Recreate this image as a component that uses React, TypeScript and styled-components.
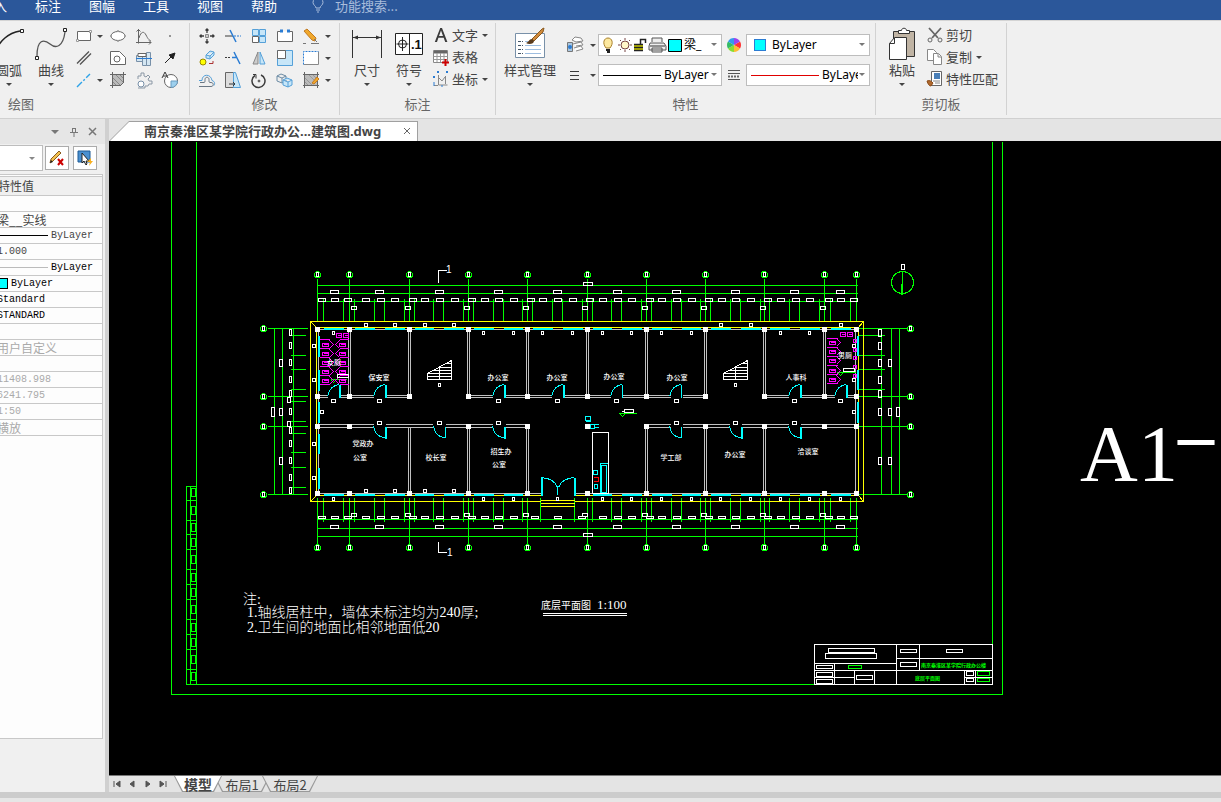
import React from "react";
import styled, { createGlobalStyle } from "styled-components";

const Global = createGlobalStyle`
  * { box-sizing: border-box; }
  body { margin: 0; background: #e6e6e6; font-family: "Noto Sans", "Noto Sans CJK SC", sans-serif; }
  button, select { font: inherit; color: inherit; }
`;

/* ---------- shell ---------- */
const Shell = styled.div`
  display: flex; flex-direction: column; min-height: 100vh; overflow: hidden;
  font-family: "Noto Sans CJK SC", sans-serif; font-size: 13px; color: #444;
`;
const MenuBar = styled.nav`
  display: flex; align-items: flex-start; height: 20px; background: #2b579a; color: #fff; overflow: hidden;
`;
const MenuItem = styled.button`
  flex: none; width: 54px; height: 12px; line-height: 12px; padding: 0; border: 0; background: none; text-align: center;
  &:first-child { margin-left: -33px; }
`;
const MenuSearch = styled.button`
  display: flex; align-items: center; gap: 11px; height: 12px; line-height: 12px; padding: 0; margin-left: 21px;
  border: 0; background: none; color: #a9bddc; white-space: nowrap;
`;
const Ribbon = styled.header`
  display: flex; background: #f0f0f0; border-top: 1px solid #d4d4d4; border-bottom: 1px solid #d0d0d0;
  padding: 2px 0 3px; overflow: hidden;
`;
const Group = styled.section<{ $w: number; $off?: number }>`
  flex: none; width: ${(p) => p.$w}px; margin-left: ${(p) => -(p.$off || 0)}px; border-right: 1px solid #d2d2d2;
`;
const GroupBody = styled.div<{ $pad: number; $end?: boolean }>`
  display: flex; height: 72px; padding-left: ${(p) => (p.$end ? 0 : p.$pad)}px; padding-right: ${(p) => (p.$end ? p.$pad : 0)}px;
  justify-content: ${(p) => (p.$end ? "flex-end" : "flex-start")};
`;
const GroupLabel = styled.div` height: 20px; line-height: 18px; text-align: center; color: #666; `;
const BigButton = styled.button<{ $w?: number }>`
  display: flex; flex-direction: column; align-items: center; flex: none; width: ${(p) => p.$w || 42}px;
  padding: 4px 0 0; border: 0; background: none; line-height: 18px; white-space: nowrap;
  svg:first-child { height: 34px; }
`;
const ArrowBox = styled.span` display: flex; align-items: center; justify-content: center; width: 10px; height: 10px; `;
const Caret = styled.i<{ $c?: string }>`
  display: block; width: 0; height: 0; border: 3px solid transparent; border-top-color: ${(p) => p.$c || "#444"}; border-bottom: 0;
`;
const IconGrid = styled.div<{ $cols: string }>`
  display: grid; grid-template-columns: ${(p) => p.$cols}; grid-auto-rows: 22px; padding-top: 2px; align-content: start;
`;
const ToolButton = styled.button`
  display: flex; align-items: center; justify-content: center; padding: 0; border: 0; background: none;
  svg { width: 18px; height: 18px; flex: none; }
`;
const List = styled.div<{ $m?: number }>` padding-top: 2px; margin-left: ${(p) => p.$m || 0}px; `;
const ListButton = styled.button`
  display: flex; align-items: center; gap: 2px; height: 22px; padding: 0 0 2px; border: 0; background: none; white-space: nowrap;
  line-height: 18px;
  svg { width: 18px; height: 18px; }
`;
const PropGrid = styled.div`
  display: grid; grid-template-columns: 26px 10px 124px 24px 124px; grid-auto-rows: 22px; row-gap: 8px;
  align-content: start; padding-top: 11px; margin-left: 2px; align-items: center; justify-items: center;
`;
const Combo = styled.label`
  position: relative; display: flex; align-items: center; width: 100%; height: 22px; background: #fff; border: 1px solid #bdbdbd;
  color: #000; padding-left: 4px; overflow: hidden;
  font: 12px/18px "Noto Sans", "Noto Sans CJK SC", sans-serif;
  & > svg { flex: none; }
`;
const ComboSelect = styled.select<{ $m?: number }>`
  appearance: none; flex: 1; min-width: 0; border: 0; background: none; padding: 0; margin: 0 11px 0 ${(p) => p.$m || 0}px;
  color: #000; outline: 0; height: 20px; text-overflow: clip;
`;
const ComboArrow = styled.span` position: absolute; right: 4px; top: 8px; `;
const Swatch = styled.span<{ $s: number; $b: string }>`
  flex: none; width: ${(p) => p.$s}px; height: ${(p) => p.$s}px; background: #0ff; border: 1px solid ${(p) => p.$b};
`;
const Rule = styled.span<{ $w: number; $c: string }>` flex: none; width: ${(p) => p.$w}px; height: 1px; background: ${(p) => p.$c}; `;

/* ---------- left panel ---------- */
const Work = styled.main` display: flex; flex: 1; min-height: 0; `;
const Panel = styled.aside`
  display: flex; flex-direction: column; flex: none; width: 120px; margin-left: -15px; background: #f0f0f0;
`;
const PanelHead = styled.div`
  display: flex; align-items: center; justify-content: flex-end; gap: 10px; height: 25px; padding-right: 8px; background: #e6e6e6;
`;
const HeadButton = styled.button` display: flex; padding: 0; border: 0; background: none; `;
const PanelTools = styled.div` display: flex; align-items: center; height: 28px; padding-bottom: 1px; `;
const PanelCombo = styled(Combo)` width: 58px; height: 26px; margin-right: 2px; & > span { top: 11px; right: 7px; } `;
const PanelButton = styled.button`
  display: flex; align-items: center; justify-content: center; width: 24px; height: 24px; margin-right: 4px; padding: 0;
  background: #fff; border: 1px solid #ababab;
`;
const PanelBody = styled.div`
  flex: 1; margin: 2px 2px 0 0; border: 1px solid #c8c8c8; border-left: 0; background: #fdfdfd; padding-top: 1px;
`;
const PropTable = styled.table`
  width: 100%; border-collapse: collapse; font: 12px/14px "Noto Sans CJK SC", sans-serif; color: #444;
  th { height: 19px; padding: 0 0 0 13px; background: #f0f0f0; text-align: left; font-weight: 400; border: 1px solid #c8c8c8; border-width: 1px 0; }
`;
const PropCell = styled.td<{ $tone: string }>`
  height: 16px; padding: 0 0 0 12px; border-bottom: 1px solid #c8c8c8; color: ${(p) => p.$tone}; white-space: nowrap;
`;
const CellLine = styled.div`
  display: flex; align-items: center; height: 15px; gap: 3px; overflow: hidden;
`;
const Mono = styled.span` font: 10px/14px "Liberation Mono", monospace; `;
const PanelFoot = styled.div` height: 53px; `;
const Splitter = styled.div` flex: none; width: 4px; background: #d0d0d0; `;

/* ---------- document area ---------- */
const Doc = styled.section` display: flex; flex-direction: column; flex: 1; min-width: 0; `;
const TabStrip = styled.div` display: flex; align-items: flex-end; height: 22px; background: #e4e4e4; `;
const FileTab = styled.div`
  position: relative; display: flex; align-items: center; justify-content: space-between; width: 309px; height: 20px; padding: 0 7px 0 35px;
  background: #a0a0a0; clip-path: polygon(0 100%, 20px 0, 100% 0, 100% 100%);
  font: bold 13px/18px "Noto Sans", "Noto Sans CJK SC", sans-serif; color: #444; white-space: nowrap;
  &::before { content: ""; position: absolute; inset: 1px 1px 0 0; background: #fff; clip-path: polygon(1px 100%, 20px 0, 100% 0, 100% 100%); }
  & > * { position: relative; }
`;
const Canvas = styled.div`
  flex: 1; min-height: 634px; background: #000; overflow: hidden;
  svg { display: block; }
`;
const LayoutStrip = styled.div`
  display: flex; height: 17px; background: #e4e4e4; border-top: 1px solid #777;
`;
const NavButtons = styled.div` display: flex; align-items: center; width: 65px; padding-right: 3px; `;
const NavButton = styled.button` display: flex; justify-content: center; width: 16px; padding: 0; border: 0; background: none; `;
const LayoutTab = styled.button<{ $on?: boolean }>`
  position: relative; width: ${(p) => (p.$on ? 48 : 56)}px; height: 16px; padding: 0; margin-right: -8px; border: 0; background: #999;
  clip-path: polygon(0 0, 8px 100%, calc(100% - 8px) 100%, 100% 0); line-height: 13px; color: #444;
  font-weight: ${(p) => (p.$on ? 700 : 400)}; font-size: ${(p) => (p.$on ? 14 : 13)}px;
  z-index: ${(p) => (p.$on ? 1 : 0)};
  &::before { content: ""; position: absolute; inset: 0 0 1px; background: ${(p) => (p.$on ? "#fff" : "#e4e4e4")};
    clip-path: polygon(1px 0, 9px 100%, calc(100% - 9px) 100%, calc(100% - 1px) 0); }
  span { position: relative; }
`;
const StatusBand = styled.div` height: 6px; background: #ccc; `;
const StatusBar = styled.footer` height: 4px; background: #e6e6e6; `;

/* ---------- icons ---------- */
const G = "#666", D = "#3b3b3b", B = "#2b7cd3", L = "#c7e6f8";
const I = ({ children }: { children: React.ReactNode }) => (
  <svg viewBox="0 0 18 18" width="18" height="18" fill="none" stroke={G} strokeWidth="1">{children}</svg>
);
const icons: Record<string, React.ReactNode> = {
  rect: <I><path d="M2.500 4.500h13v9h-13z" fill="#fff"/><path d="M14.500 3.500h2v2h-2zM1.500 12.500h2v2h-2z" fill="#fff" stroke="#999"/></I>,
  dline: <I><path d="M2 14.500 14 2.500M5 15.500 16 4.500" stroke="#555" strokeWidth="1.400"/></I>,
  axis: <I><path d="M2 16 15 3" stroke="#2ea3e8" strokeWidth="1.400" strokeDasharray="7 2 2 2"/></I>,
  ellipse: <I><ellipse cx="9" cy="9" rx="7" ry="4.500" fill="#fff"/><path d="M8.500 3.500h1v1h-1zM8.500 13.500h1v1h-1zM1.500 8.500h1v1h-1zM15.500 8.500h1v1h-1z" fill="#fff" stroke="#999"/></I>,
  plate: <I><path d="M1.500 2.500h9l6 6v7h-15z" fill="#fff"/><circle cx="8" cy="10" r="3"/></I>,
  hatch: <I><path d="M3.500 3.500h11v8l-3 3h-8z" fill="#bbb"/><path d="M4 7l7 7M4 11l3 3M7 4l7 7M11 4l3 3" stroke="#888"/><path d="M3.500 1v16M1 3.500h16M14.500 1v11M1 14.500h11"/></I>,
  curve: <I><path d="M3.500 2v14.500M1 15.500h15M1.500 4.500l2-2 2 2M14 13.500l2 2-2 2"/><path d="M4 11C6 4 9 4 11 8s3 5 5 6"/></I>,
  shaft: <I><path d="M1.500 6.500h6v6h-6zM7.500 7.500h4v9h-4zM11.500 3.500h4v13h-4z" fill="#d4e6f2" stroke="#7890a8"/><path d="M1 9.500h16" stroke={B}/><path d="M3 4.500h8v3h-8z" fill="#fff"/></I>,
  gear: <I><path d="M3 8V5h3V2h3v3l2 1 2-2 2 2-2 2 1 2h3v3h-3l-1 2h-3v2H3" stroke="#8a97a5"/><circle cx="6" cy="13" r="3" fill="#fff" stroke="#7890a8"/></I>,
  dot: <I><path d="M8 8.500h2v1H8z" fill={D} stroke="none"/></I>,
  arrow: <I><path d="M4 14 12 6" stroke="#222"/><path d="m14 4-2 6-4-4z" fill="#222" stroke="#222"/></I>,
  sec: <I><circle cx="10" cy="10" r="6.500" fill="#fff"/><path d="M10 10h6.500a6.500 6.500 0 0 1-6.500 6.500z" fill="#9dd0ee" stroke="#6a9cc0"/><path d="m1 7 3-6 3 6M2 5h4" stroke={D}/></I>,
  move: <I><path d="M9 2v4M9 12v4M2 9h4M12 9h4M7.500 3.500 9 2l1.500 1.500M7.500 14.500 9 16l1.500-1.500M3.500 7.500 2 9l1.500 1.500M14.500 7.500 16 9l-1.500 1.500" stroke={D} strokeWidth="1.300"/><path d="M7.500 7.500h3v3h-3z" fill="#ccc" stroke="#888"/></I>,
  trim: <I><path d="M1 9h8" stroke={D}/><path d="M10 9h7" stroke={B} strokeDasharray="2 1"/><path d="m6 3 6 12" stroke={B} strokeWidth="1.500"/></I>,
  array: <I><path d="M2.500 2.500h6v6h-6zM9.500 2.500h6v6h-6zM9.500 9.500h6v6h-6z" fill={L} stroke="#55a0d8"/><path d="M2.500 9.500h6v6h-6z" fill="#fff"/></I>,
  brk: <I><path d="M5 4.500H1.500v10h15v-10H13" fill="#fff"/><path d="M4 4h3M11 4h3" stroke={B} strokeWidth="3"/></I>,
  erase: <I><path d="m2 4 3-2 9 9-1 3-3-1z" fill="#f0a82c" stroke="#c27a20"/><path d="m12 12 3 3M1 16.500h3M9 16.500h8" stroke="#777"/></I>,
  copy: <I><circle cx="5" cy="13" r="3" fill="#ff0" stroke="#998800"/><path d="m8 6 4-4 4 1v3l-4 4-4-1zM8 6l4 1 4-4M12 7v3" fill={L} stroke="#55a0d8"/><path d="M11 14.500h4V12" stroke="#a33"/></I>,
  ext: <I><path d="M1 8.500h6" stroke={D} strokeDasharray="2 1"/><path d="M10 3 16 15M8 8.500h5" stroke={B} strokeWidth="1.500"/></I>,
  mirror: <I><path d="M8 3v12H3z" fill="#ccc" stroke="#888"/><path d="M10 3v12h5z" fill={L} stroke="#55a0d8"/></I>,
  scale: <I><path d="M1.500 1.500h15v15h-15z" fill={L} stroke="#55a0d8"/><path d="M1.500 1.500h8v8h-8z" fill="#fff"/></I>,
  region: <I><path d="M1.500 2.500h15v13h-15z" fill="#fff" stroke="#888"/><path d="M1.500 15.500V2.500h15" stroke="#fff"/><path d="M1.500 15.500V2.500h15" stroke={B} strokeDasharray="2 1"/></I>,
  offset: <I><path d="M1 15.500h12c3 0 3-4 0-4h-1c-1 0-1-1-1-3 0-3-4-3-4 0 0 2 0 3-1 3H2" stroke="#6a7784"/><path d="M1 9.500h3c0-7 9-7 10 0 3 1 3 3 2 5" stroke="#55a0d8"/></I>,
  taper: <I><path d="M1.500 1.500h8v15h-8z" fill="#ddd"/><path d="M9.500 1.500h2l5 15h-7z" fill={L} stroke="#55a0d8"/><path d="M5 13h6M9 11l2 2-2 2" stroke={D}/></I>,
  rotate: <I><path d="M5 4.500a6.500 6.500 0 1 0 6-.500" stroke={D} strokeWidth="1.500"/><path d="M3 3.500h3v4" stroke={D}/><circle cx="9" cy="10" r="1" fill={D}/></I>,
  cube: <I><path d="m1 5 4-2 5 2v5l-4 2-5-2zM6 7v5M1 5l5 2 4-2" fill="#eee" stroke="#6b8ba4"/><path d="m7 9 4-2 5 2v5l-4 2-5-2zM12 11v5M7 9l5 2 4-2" fill={L} stroke="#55a0d8"/></I>,
  hedit: <I><path d="M2.500 3.500h13v11h-13z" fill="#bbb"/><path d="M3 7l7 7M3 11l3 3M7 4l7 7M11 4l4 4" stroke="#999"/><path d="M1 3.500h16M1 14.500h16M2.500 1v16M15.500 1v16"/><path d="m10 12 5-6 2 2-5 5z" fill="#f0a82c" stroke="#c77b20"/></I>,
  text: <svg viewBox="0 0 18 18"><path d="M2.800 16 8.200 2h1.800L15.400 16h-2.200l-1.500-4.200H6.400L5 16zM7 10h4L9 4.500z" fill={D}/></svg>,
  table: <I><path d="M1.500 2.500h14v12h-14z" fill="#fff" stroke="#888"/><path d="M2 4h13" strokeWidth="3"/><path d="M1.500 8.500h14M1.500 11.500h14M5 5v9M8.500 5v9M12 5v9" stroke="#999"/><path d="M10 14.500h7M13.500 11v7" stroke="#c00" strokeWidth="2"/></I>,
  coord: <I><path d="M6.500 5v10h9M2 15.500h4M13.500 6v8M7 8l3 3 3-4" stroke="#888"/><path d="m5 1 2 2m0-2L5 3M14 1l2 2m0-2-2 2M1 6l2 2m0-2L1 8M2 12v4M10 15v2" stroke={B}/></I>,
  cut: <I><path d="m3 2 9 10M15 2 6 12" stroke="#666" strokeWidth="1.800"/><circle cx="4" cy="14" r="2"/><circle cx="14" cy="14" r="2"/></I>,
  pages: <I><path d="M1.500 1.500h6l3 3v8h-9z" fill="#fff" stroke="#888"/><path d="M7.500 5.500h5l3 3v8h-8zM12 6v3h3" fill="#fff" stroke="#888"/></I>,
  match: <I><path d="M5.500 1.500h10v14h-10z" fill="#fff"/><path d="M8 3h6v6H8z" fill="#4a7fb8" stroke="none"/><path d="M7 11h7M9 13h5" stroke="#888"/><path d="M1 11c3-1 4 0 6 2l-2 3c-2 0-3-2-4-5z" fill="#b0692d" stroke="#8a4a18"/></I>,
  layers: <I><path d="m6 4 3-3 6 1 2 3-7 1zM7 8l8-2 2 3-7 1M8 12l7-2 2 3-7 2" fill="#fff" stroke="#888"/><path d="M1.500 6.500h5v9h-5z" fill="#a9c6e0" stroke="#777"/><circle cx="4" cy="11" r="2" fill={B} stroke="none"/></I>,
  lines: <I><path d="M4 5.500h9M4 9.500h9M4 13.500h9" stroke={D} strokeWidth="1.200"/></I>,
  ltype: <I><path d="M3 4.500h12M3 7.500h12M3 13.500h12" stroke="#555"/><path d="M3 10.500h12" strokeDasharray="2 1" strokeWidth="2"/></I>,
};
const Tool = ({ n, label }: { n: string; label: string }) => <ToolButton aria-label={label}>{icons[n]}</ToolButton>;
const Drop = () => <ToolButton aria-label="更多"><Caret /></ToolButton>;
const Down = () => <ArrowBox><Caret /></ArrowBox>;

const Wheel = () => (
  <svg width="16" height="16" viewBox="-8 -8 16 16">
    {["#f33", "#fb3", "#8d3", "#3b6", "#39e", "#94e"].map((c, i) => (
      <path key={c} d="M0 0V-7A7 7 0 0 1 6 -3.500Z" fill={c} transform={`rotate(${i * 60 + 60})`} />
    ))}
  </svg>
);
const LayerIcons = () => (
  <svg width="79" height="18" viewBox="0 0 79 18" fill="none" stroke="#222">
    <path d="M3 12C-1 7 1 2 5 2s6 5 2 10z" fill="#fde9a0" stroke="#a87f2a" /><path d="M3 14h4M4 16h3" strokeWidth="2" />
    <circle cx="22" cy="9" r="4" fill="#fff6c8" stroke="#744" /><path d="M22 2v2M22 14v2M15 9h2M27 9h2M17 4l1 1M26 13l1 1M27 4l-1 1M18 13l-1 1" stroke="#744" />
    <path d="M31 8h9v7h-9z" fill="#c8c800" stroke="none" /><path d="M31 8.500h9M31 11.500h9M31 14.500h9M37.500 8V3.500h5V7" strokeWidth="1.500" />
    <path d="M49 6V2h10v4M47 7h14l2 3v4H46v-4zM49 12h10v4H49z" fill="#eee" stroke="#555" /><path d="M47 10h15" stroke="#333" />
    <path d="M65.500 3.500h13v12h-13z" fill="#0ff" stroke="#000" />
  </svg>
);

/* ---------- floor plan ---------- */
const AXES = [317, 349, 409, 468, 527, 587, 646, 705, 764, 824, 856];
const ROWS = [328, 396, 426, 494];
const WINDOWS = [[323, 343], [354, 374], [384, 404], [414, 433], [443, 463], [473, 493], [503, 522], [532, 552], [562, 582],
  [592, 611], [621, 641], [651, 671], [681, 700], [710, 730], [740, 760], [769, 789], [799, 819], [830, 850]];
const LOWER_WINDOWS = WINDOWS.filter(([a]) => a !== 532 && a !== 562);
const SPANS = [334, 379, 439, 498, 557, 617, 676, 735, 794, 840];
const TOP_DIMS = [321, 334, 347, 365, 380, 394, 412, 424, 439, 454, 471, 484, 498, 513, 530, 542, 557, 572, 589, 602, 617, 631, 649, 661, 676, 691, 708, 721, 735, 750, 767, 780, 795, 809, 828, 840, 853];
const BOTTOM_DIMS = TOP_DIMS.filter((x) => x !== 530 && x !== 542 && x !== 572 && x !== 589).concat([534, 581]);
const OFFSETS = [353, 407, 466, 525, 584, 644, 703, 762, 822];
const UPPER_WALL = [[318, 327], [338, 373], [385, 409], [468, 492], [504, 551], [563, 610], [622, 670], [682, 705], [764, 788], [800, 834], [846, 856]];
const LOWER_WALL = [[318, 373], [385, 432], [445, 492], [505, 529], [646, 670], [682, 729], [741, 788], [800, 856]];
const SIDE_TICKS = [335, 355, 369, 389, 401, 421, 433, 452, 467, 487];

const h = (x1: number, x2: number, y: number) => `M${x1} ${y}H${x2}`;
const v = (x: number, y1: number, y2: number) => `M${x} ${y1}V${y2}`;
const box = (x: number, y: number, w: number, hh: number) => `M${x - (w >> 1)} ${y - (hh >> 1)}h${w}v${hh}h${-w}z`;
const seg = (a: number, b: number, c: number, d: number) => `M${a} ${b}H${c}V${d}H${a}z`;

const green = [
  "M171 141V694H1002V141M196 141V684H992V141M186 684V486H196M190 486V684M186 684H196",
  ...[500, 520, 534, 549, 569, 584, 599, 619, 634, 649, 669].map((y) => h(186, 196, y)),
  ...[492, 510, 527, 542, 559, 577, 592, 609, 627, 642, 659, 676].map((y) => box(193, y, 4, 8)),
  ...[285, 293, 301, 519, 528, 536].map((y) => h(316, 857, y)),
  ...AXES.flatMap((x) => [v(x, 278, 321), v(x, 497, 543)]),
  ...WINDOWS.flat().map((x) => v(x, 298, 320)),
  ...LOWER_WINDOWS.flat().concat([540, 574]).map((x) => v(x, 497, 521)),
  ...ROWS.flatMap((y) => [h(267, 307, y), h(858, 907, y)]),
  ...[274, 282, 293, 881, 891, 899].map((x) => v(x, 328, 494)),
  ...SIDE_TICKS.map((y) => h(290, 305, y)),
  ...SIDE_TICKS.slice(0, 4).map((y) => h(858, 884, y)),
  "M902 271V294M901 283V294M618 413H636M620 414l2 2 2-2M330 379H346M331 380l2 2 2-2M836 372H855M838 373l2 2 2-2",
  seg(848, 665, 861, 668), seg(977, 671, 989, 675), seg(977, 678, 989, 681),
].join("");

const gray = [
  h(318, 857, 329), h(318, 540, 493), h(574, 857, 493), v(318, 329, 493), v(855, 329, 493),
  ...UPPER_WALL.flatMap(([a, b]) => [h(a, b, 395), h(a, b, 397)]),
  ...LOWER_WALL.flatMap(([a, b]) => [h(a, b, 424), h(a, b, 427)]),
  ...AXES.slice(1, -1).flatMap((x) => [v(x - 1, 329, 396), v(x + 1, 329, 396)]),
  ...[409, 468, 527, 646, 705, 764].flatMap((x) => [v(x - 1, 426, 493), v(x + 1, 426, 493)]),
].join("");

const white = [
  ...SPANS.flatMap((x) => [box(x, 291, 8, 3), box(x, 526, 8, 3)]),
  box(587, 283, 9, 3), box(587, 534, 9, 3),
  ...TOP_DIMS.map((x) => box(x, 299, 7, 3)), ...BOTTOM_DIMS.map((x) => box(x, 517, 7, 2)),
  ...OFFSETS.flatMap((x) => [box(x, 307, 5, 3), box(x, 514, 5, 3)]),
  ...[365, 394, 424, 453, 720, 750, 840].map((x) => box(x, 324, 3, 3)),
  ...[333, 483, 513, 542, 572, 602, 631, 661, 691, 780, 809].map((x) => box(x, 332, 2, 3)),
  ...[365, 394, 424, 453].map((x) => box(x, 490, 3, 3)),
  ...[333, 483, 513, 557, 602, 631, 661, 691, 720, 750, 780, 809, 840].map((x) => box(x, 498, 2, 3)),
  ...[345, 379, 443, 477].map((y) => box(313, y, 3, 3)), box(321, 411, 3, 3),
  ...[345, 379, 411].map((y) => box(853, y, 3, 3)),
  ...[333, 379, 498, 557, 616, 676, 794, 840].map((x) => box(x, 400, 4, 3)),
  ...[379, 439, 498, 676, 735, 794].map((x) => box(x, 422, 4, 3)),
  ...[332, 345, 362, 379, 393, 411, 430, 443, 460, 477, 490].map((y) => box(290, y, 2, 6)),
  ...[332, 345, 362, 379, 393, 411, 460].map((y) => box(879, y, 3, 7)),
  ...[362, 411, 460].flatMap((y) => [box(280, y, 3, 7), box(889, y, 3, 7)]),
  box(272, 411, 3, 9), box(897, 411, 3, 9), box(288, 399, 3, 5), box(288, 423, 3, 5), box(902, 266, 3, 5),
  "M438 282V270H446M438 541V552H446", seg(592, 432, 608, 493), seg(624, 409, 633, 412), "M621 411h3",
  ...[427, 723].map((x) => `M${x} 379V373L${x + 24} 360V379zM${x + 24} 363h-6M${x + 24} 367h-14M${x + 24} 370h-19M${x + 24} 373H${x}M${x + 24} 376H${x}M${x + 12} 366V379`),
  box(439, 384, 2, 3), box(735, 384, 2, 3), seg(337, 374, 348, 377), seg(843, 368, 854, 371),
  h(542, 626, 613), h(542, 626, 615),
  "M814 644H992V684H814zM814 663H896M814 670H992M896 658H992M896 644V684M919 644V670M834 663V684M854 670V684M874 670V684M814 677H854M964 677H992M964 670V684M975 670V684",
  seg(828, 648, 874, 652), seg(825, 653, 876, 658), seg(900, 649, 916, 652), seg(946, 649, 962, 652), seg(900, 662, 916, 666),
  seg(816, 665, 832, 668), seg(816, 672, 832, 676), seg(816, 679, 832, 683), seg(856, 675, 872, 679), seg(966, 671, 973, 675), seg(966, 678, 973, 681),
].join("");

const yellow = "M540 501H310V321H863V501H574M540 495H316V327H858V495H574M310 321l6 6M863 321l-5 6M310 501l6-6M863 501l-5-6M540 500H574M540 503H574M540 506H574";

const cyanThick = [
  ...WINDOWS.map(([a, b]) => h(a, b, 328)), ...LOWER_WINDOWS.map(([a, b]) => h(a, b, 494)),
  ...[[335, 356], [369, 390], [401, 422], [433, 453], [467, 488]].map(([a, b]) => v(318, a, b)),
  ...[[335, 355], [369, 389], [401, 422]].map(([a, b]) => v(857, a, b)),
  ...[339, 385, 504, 563, 800, 846].map((x) => v(x, 384, 397)),
  ...[385, 504, 741, 800].map((x) => v(x, 426, 438)),
  v(541, 477, 495), v(574, 477, 495),
].join("");
const cyanThin = [
  ...[339, 385, 504, 563, 622, 681, 800, 846].map((x) => `M${x - 12} 396Q${x - 10} 385 ${x} 384`),
  v(622, 384, 397), v(681, 384, 397), v(445, 426, 437), v(681, 426, 437),
  ...[385, 445, 504, 681, 741, 800].map((x) => `M${x - 12} 426Q${x - 10} 437 ${x} 437`),
  "M541 477Q554 478 557 487V494M574 477Q561 478 558 487", seg(600, 463, 608, 493), seg(601, 465, 606, 492),
  box(595, 472, 4, 4), box(595, 486, 3, 4), box(587, 418, 5, 4), "M585 421h5M590 424h4v4h-4zM594 424h4M594 427h4",
].join("");

const magenta = [
  ...[339, 348, 357, 366, 375, 384].map((y) => h(319, 329, y) + h(339, 348, y)),
  ...[344, 353, 362, 371, 380].flatMap((y) => [box(325, y, 6, 3), box(342, y, 6, 3), `M323 ${y}h4M340 ${y}h4M329 ${y - 4}l4 4-4 4M339 ${y - 4}l-4 4 4 4`]),
  box(338, 335, 5, 4), box(345, 335, 5, 4), "M337 335h3M344 335h3",
  ...[338, 347, 356, 365, 374, 383].map((y) => h(826, 837, y)),
  ...[342, 351, 360, 370, 379].flatMap((y) => [box(832, y, 6, 3), `M830 ${y}h4M836 ${y - 4}l4 4-4 4`]),
  ...[340, 349, 357, 366, 375].map((y) => box(854, y, 3, 3)), box(842, 334, 5, 4), box(849, 334, 5, 4), "M841 334h3M848 334h3",
].join("");

const ROOMS: [number, number, string][] = [
  [379, 380, "保安室"], [498, 380, "办公室"], [557, 380, "办公室"], [614, 379, "办公室"], [677, 380, "办公室"], [796, 380, "人事科"],
  [363, 446, "党政办"], [360, 460, "公室"], [436, 460, "校长室"], [501, 454, "招生办"], [499, 467, "公室"],
  [671, 460, "学工部"], [735, 457, "办公室"], [808, 454, "洽谈室"], [334, 365, "女厕"], [845, 358, "男厕"],
];

const Plan = () => (
  <svg width="1112" height="634" viewBox="109 141 1112 634" fontFamily='"Liberation Serif", "Noto Sans CJK SC", sans-serif' fill="#fff">
    <g transform="translate(0.5 0.5)" fill="none" shapeRendering="crispEdges">
      <path d={gray} stroke="#c0c0c0" />
      <path d={green} stroke="#0f0" />
      <circle cx="902" cy="282" r="11" stroke="#0f0" />
      {AXES.flatMap((x) => [274, 547].map((y) => <circle key={`${x}-${y}`} cx={x} cy={y} r="3" stroke="#0f0" />))}
      {ROWS.flatMap((y) => [263, 910].map((x) => <circle key={`${x}-${y}`} cx={x} cy={y} r="3" stroke="#0f0" />))}
      <path d={magenta} stroke="#f0f" />
      <path d={yellow} stroke="#ff0" />
      <path d={cyanThick} stroke="#0ff" strokeWidth="2" />
      <path d={cyanThin} stroke="#0ff" />
      <path d={white} stroke="#fff" />
      <path d={[...AXES.flatMap((x) => [box(x, 274, 2, 4), box(x, 547, 2, 4)]), ...ROWS.flatMap((y) => [box(263, y, 2, 4), box(910, y, 2, 4)])].join("")} stroke="#fff" />
      <path d="M593 477h5v4h-5" stroke="#f00" />
    </g>
    <g shapeRendering="crispEdges">
      {[329, 396, 426, 493].flatMap((y) => AXES.filter((x) => !(y === 426 && x === 409)).map((x) => (
        <rect key={`${x}-${y}`} x={x - 2} y={y - 2} width="5" height="5" />
      )))}
    </g>
    <g fontSize="7" fontWeight="500" textAnchor="middle">
      {ROOMS.map(([x, y, t]) => <text key={`${x}-${y}`} x={x} y={y}>{t}</text>)}
    </g>
    <g fontSize="10" fontFamily="Liberation Sans">
      <text x="446" y="273">1</text>
      <text x="447" y="556">1</text>
    </g>
    <g fontSize="14" fontWeight="300">
      <text x="243" y="604">注:</text>
      <text x="247" y="617">1.轴线居柱中，墙体未标注均为240厚;</text>
      <text x="247" y="632">2.卫生间的地面比相邻地面低20</text>
    </g>
    <text x="541" y="609" fontSize="10">底层平面图</text>
    <text x="597" y="609" fontSize="13">1:100</text>
    <g fill="#0f0" fontSize="5" fontWeight="700">
      <text x="921" y="667">南京秦淮区某学院行政办公楼</text>
      <text x="915" y="680">底层平面图</text>
    </g>
    <text x="1129" y="481" fontSize="80" textAnchor="middle" fontFamily='"Liberation Serif"'>A1</text>
    <text x="1178" y="459" fontSize="72" fontWeight="700" fontFamily='"Liberation Serif"'>–</text>
  </svg>
);

const MENUS = ["插入", "标注", "图幅", "工具", "视图", "帮助"];
const PROPS: [string, string, string?][] = [
  ["", "#444"], ["梁__实线", "#444"], ["ByLayer", "#444", "line"], ["1.000", "#444", "mono"], ["ByLayer", "#000", "thin"],
  ["ByLayer", "#000", "color"], ["Standard", "#000", "mono"], ["STANDARD", "#000", "mono"], ["", "#444"], ["用户自定义", "#aaa"],
  ["", "#444"], ["11408.998", "#aaa", "mono"], ["6241.795", "#aaa", "mono"], ["1:50", "#aaa", "mono"], ["横放", "#aaa"],
];

export default function App() {
  return (
    <Shell>
      <Global />
      <MenuBar>
        {MENUS.map((m) => <MenuItem key={m}>{m}</MenuItem>)}
        <MenuSearch>
          <svg width="12" height="16" viewBox="0 0 12 16" fill="none" stroke="#a9bddc"><path d="M4 10C4 8 1 7 1 4.500a5 5 0 0 1 10 0C11 7 8 8 8 10zM4 12h4M5 14h2" /></svg>
          功能搜索...
        </MenuSearch>
      </MenuBar>

      <Ribbon>
        <Group $w={337} $off={147}>
          <GroupBody $pad={6} $end>
            <BigButton>
              <svg width="34" height="34" viewBox="0 0 34 34" fill="none" stroke="#222"><path d="M0 30C8 12 17 6 28 4" strokeWidth="1.500" /><path d="M28.500 2.500h3v3h-3z" fill="#fff" /></svg>
              圆弧<Down />
            </BigButton>
            <BigButton>
              <svg width="34" height="34" viewBox="0 0 34 34" fill="none" stroke="#555"><path d="M3 29C3 12 10 12 16 17S29 20 31 5" strokeWidth="1.300" /><path d="M29.500 1.500h3v3h-3zM1.500 29.500h3v3h-3z" fill="#fff" stroke="#222" /></svg>
              曲线<Down />
            </BigButton>
            <IconGrid $cols="23px 10px 26px 26px 26px">
              <Tool n="rect" label="矩形" /><Drop /><Tool n="ellipse" label="椭圆" /><Tool n="curve" label="公式曲线" /><Tool n="dot" label="点" />
              <Tool n="dline" label="平行线" /><span /><Tool n="plate" label="局部放大" /><Tool n="shaft" label="孔轴" /><Tool n="arrow" label="箭头" />
              <Tool n="axis" label="中心线" /><Drop /><Tool n="hatch" label="剖面线" /><Tool n="gear" label="齿轮" /><Tool n="sec" label="放大图" />
            </IconGrid>
          </GroupBody>
          <GroupLabel>绘图</GroupLabel>
        </Group>

        <Group $w={150}>
          <GroupBody $pad={4}>
            <IconGrid $cols="26px 26px 26px 26px 26px 8px">
              <Tool n="move" label="平移" /><Tool n="trim" label="裁剪" /><Tool n="array" label="阵列" /><Tool n="brk" label="打断" /><Tool n="erase" label="删除" /><Drop />
              <Tool n="copy" label="平移复制" /><Tool n="ext" label="延伸" /><Tool n="mirror" label="镜像" /><Tool n="scale" label="缩放" /><Tool n="region" label="分解" /><Drop />
              <Tool n="offset" label="等距线" /><Tool n="taper" label="拉伸" /><Tool n="rotate" label="旋转" /><Tool n="cube" label="三维" /><Tool n="hedit" label="编辑" /><Drop />
            </IconGrid>
          </GroupBody>
          <GroupLabel>修改</GroupLabel>
        </Group>

        <Group $w={156}>
          <GroupBody $pad={6}>
            <BigButton>
              <svg width="34" height="34" viewBox="0 0 34 34" fill="none" stroke="#333"><path d="M2.500 3v28M31.500 3v28M3 10.500h28" /><path d="m3 10.500 5-2v4zM31 10.500l-5-2v4z" fill="#333" stroke="none" /></svg>
              尺寸<Down />
            </BigButton>
            <BigButton>
              <svg width="30" height="34" viewBox="0 0 30 34" fill="#fff" stroke="#222"><path d="M1.500 6.500h27v21h-27zM15.500 6.500v21" /><circle cx="8.500" cy="17" r="4" /><path d="M2.500 17h12M8.500 10v14" /><text x="17" y="22" fontSize="13" fontWeight="700" fontFamily="Liberation Sans" fill="#111" stroke="none">.1</text></svg>
              符号<Down />
            </BigButton>
            <List $m={2}>
              <ListButton>{icons.text}文字<Down /></ListButton>
              <ListButton>{icons.table}表格</ListButton>
              <ListButton>{icons.coord}坐标<Down /></ListButton>
            </List>
          </GroupBody>
          <GroupLabel>标注</GroupLabel>
        </Group>

        <Group $w={380}>
          <GroupBody $pad={4}>
            <BigButton $w={60}>
              <svg width="32" height="34" viewBox="0 0 32 34" fill="none"><path d="M1.500 6.500h29v24h-29z" fill="#fff" stroke="#7890a8" /><path d="M4 14.500h5M4 18.500h5M4 22.500h5M4 26.500h5" stroke="#456" strokeDasharray="3 1" /><path d="M11 14.500h3M11 18.500h16M11 22.500h16M11 26.500h16" stroke="#9dbde0" /><path d="M18 12 28 2l2-1-1 4-9 9z" fill="#d08a3c" stroke="#8a5a20" /><path d="M12 16c3-1 3-4 6-4l2 2c0 3-5 4-8 2z" fill="#5a3b1c" /></svg>
              样式管理<Down />
            </BigButton>
            <PropGrid>
              <Tool n="layers" label="图层" /><Drop />
              <Combo aria-label="图层选择"><LayerIcons /><ComboSelect $m={2}><option>梁_</option></ComboSelect><ComboArrow><Caret $c="#777" /></ComboArrow></Combo>
              <Wheel />
              <Combo aria-label="颜色"><Rule $w={3} $c="#fff" /><Swatch $s={12} $b="#2b7cd3" /><ComboSelect $m={6}><option>ByLayer</option></ComboSelect><ComboArrow><Caret $c="#777" /></ComboArrow></Combo>
              <Tool n="lines" label="线宽" /><Drop />
              <Combo aria-label="线宽"><Rule $w={58} $c="#000" /><ComboSelect $m={3}><option>ByLayer</option></ComboSelect><ComboArrow><Caret $c="#777" /></ComboArrow></Combo>
              <Tool n="ltype" label="线型" />
              <Combo aria-label="线型"><Rule $w={68} $c="#e00000" /><ComboSelect $m={3}><option>ByLayer</option></ComboSelect><ComboArrow><Caret $c="#777" /></ComboArrow></Combo>
            </PropGrid>
          </GroupBody>
          <GroupLabel>特性</GroupLabel>
        </Group>

        <Group $w={131}>
          <GroupBody $pad={5}>
            <BigButton>
              <svg width="28" height="34" viewBox="0 0 28 34" stroke="#333"><path d="M5.500 4.500h21v25h-21z" fill="#c0b4a4" /><path d="M10.500 6.500v-3h3c0-3 5-3 5 0h3v3z" fill="#fff" /><path d="M1.500 32.500v-16l5-6h12v22z" fill="#fff" /><path d="M6.500 11v5.500h-5" fill="none" /></svg>
              粘贴<Down />
            </BigButton>
            <List $m={3}>
              <ListButton>{icons.cut}剪切</ListButton>
              <ListButton>{icons.pages}复制<Down /></ListButton>
              <ListButton>{icons.match}特性匹配</ListButton>
            </List>
          </GroupBody>
          <GroupLabel>剪切板</GroupLabel>
        </Group>
      </Ribbon>

      <Work>
        <Panel>
          <PanelHead>
            <HeadButton aria-label="选项"><svg width="10" height="10"><path d="M1 3h8L5 7z" fill="#777" /></svg></HeadButton>
            <HeadButton aria-label="固定"><svg width="8" height="10" fill="none" stroke="#777"><path d="M2.500 1v4M5.500 1v4M2 1.500h4M0 5.500h8M4 6v4" /></svg></HeadButton>
            <HeadButton aria-label="关闭"><svg width="9" height="9"><path d="m1 1 7 7M8 1 1 8" stroke="#777" strokeWidth="1.500" /></svg></HeadButton>
          </PanelHead>
          <PanelTools>
            <PanelCombo aria-label="选择集"><ComboSelect><option></option></ComboSelect><ComboArrow><Caret $c="#888" /></ComboArrow></PanelCombo>
            <PanelButton aria-label="清除"><svg width="18" height="18"><path d="m2 14 1-4 8-8 2 2-8 8z" fill="#f2c14e" stroke="#8a5a20" /><path d="m2 14 1-3 2 2z" fill="#222" /><path d="m10 10 5 6M15 10l-5 6" stroke="#c00" strokeWidth="2" /></svg></PanelButton>
            <PanelButton aria-label="快速选择"><svg width="18" height="18"><path d="M2 2h12v11H2z" fill="#4a90d0" stroke="#1c5a96" /><path d="M6 4v10l2-2 2 4 1-1-1-3h3z" fill="#fff" stroke="#222" /><path d="m15 9-4 4h3l-1 4 4-5h-2z" fill="#f8b020" /></svg></PanelButton>
          </PanelTools>
          <PanelBody>
            <PropTable>
              <thead><tr><th scope="col">特性值</th></tr></thead>
              <tbody>
                {PROPS.map(([t, tone, kind], i) => (
                  <tr key={i}><PropCell $tone={tone}><CellLine>
                    {kind === "line" && <Rule $w={51} $c="#000" />}
                    {kind === "thin" && <Rule $w={51} $c="#bbb" />}
                    {kind === "color" && <Swatch $s={11} $b="#000" />}
                    {kind ? <Mono>{t}</Mono> : t}
                  </CellLine></PropCell></tr>
                ))}
              </tbody>
            </PropTable>
          </PanelBody>
          <PanelFoot />
        </Panel>
        <Splitter />
        <Doc>
          <TabStrip>
            <FileTab>
              <span>南京秦淮区某学院行政办公...建筑图.dwg</span>
              <HeadButton aria-label="关闭文件"><svg width="8" height="8"><path d="m1 1 6 6M7 1 1 7" stroke="#666" /></svg></HeadButton>
            </FileTab>
          </TabStrip>
          <Canvas><Plan /></Canvas>
          <LayoutStrip>
            <NavButtons>
              {["M1 1v6M7 1 3 4l4 3z", "M6 1 2 4l4 3z", "M2 1l4 3-4 3z", "M1 1l4 3-4 3zM7 1v6"].map((d, i) => (
                <NavButton key={d} aria-label={["首页", "上一页", "下一页", "末页"][i]}><svg width="8" height="8"><path d={d} fill="#555" stroke="#555" strokeWidth="1" /></svg></NavButton>
              ))}
            </NavButtons>
            <LayoutTab $on><span>模型</span></LayoutTab>
            <LayoutTab><span>布局1</span></LayoutTab>
            <LayoutTab><span>布局2</span></LayoutTab>
          </LayoutStrip>
        </Doc>
      </Work>
      <StatusBand />
      <StatusBar />
    </Shell>
  );
}
